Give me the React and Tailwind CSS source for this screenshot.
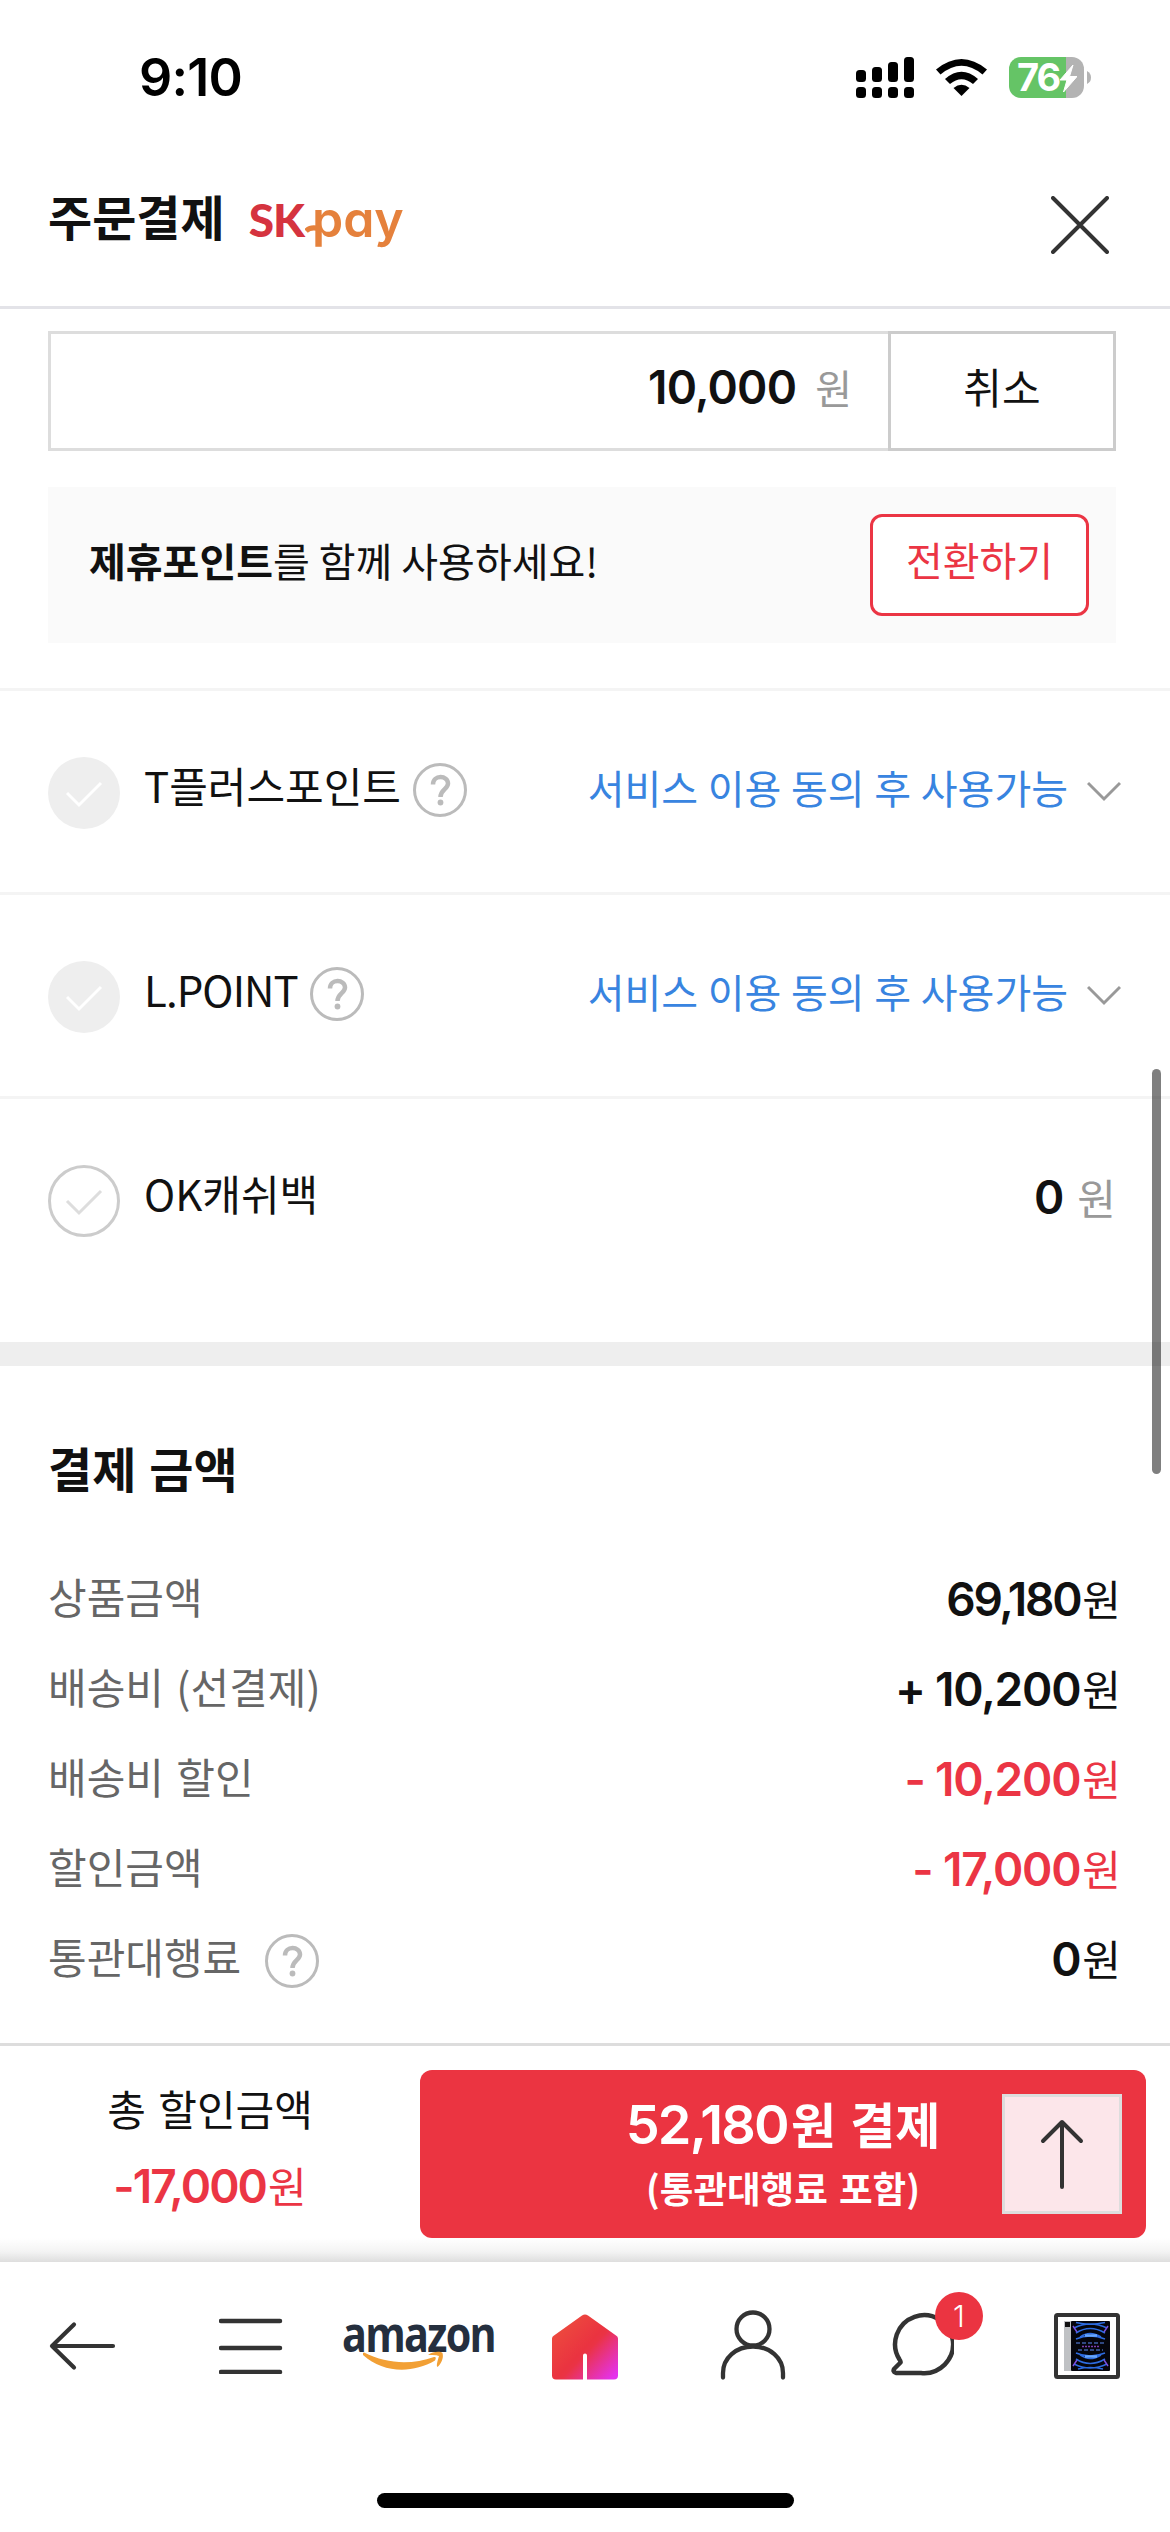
const KR = "font-['Noto_Sans_CJK_KR',sans-serif]";
const NUM = "font-['Inter','Noto_Sans_CJK_KR',sans-serif]";

function StatusBar() {
  const tops = [70, 67, 62, 57];
  return (
    <div className="flex h-[150px] shrink-0 items-start justify-between pl-[139px] pr-[79px]">
      <div className="mt-[47px] font-['Inter',sans-serif] text-[52px] font-semibold leading-[62px] tracking-[-0.800px] text-black">9:10</div>
      <div className="mt-[57px] flex h-[41px] items-start">
        <svg width="58" height="41" viewBox="856 57 58 41">
          {tops.map((t, i) => (
            <g key={t}>
              <rect x={856 + i * 16} y={t} width="10" height={82 - t} rx="3.5" />
              <rect x={856 + i * 16} y="87" width="10" height="11" rx="3.5" />
            </g>
          ))}
        </svg>
        <svg className="ml-[22px]" width="51" height="41" viewBox="936 57 51 41">
          <path d="M936 69.500Q961.500 48.500 987 69.500L982.500 74.500Q961.500 57 940.500 74.500Z" />
          <path d="M945 79Q961.500 64.500 978 79L973 84Q961.500 74.500 950 84Z" />
          <path d="M953.500 88Q961.500 81.500 969.500 88L961.500 96Z" />
        </svg>
        <div className="ml-[22px] flex h-[41px] w-[75px] items-center justify-center rounded-[12px] bg-[linear-gradient(90deg,#65c466_57px,#b3b3b3_57px)] pl-[1px]">
          <span className="font-['Inter',sans-serif] text-[38px] font-bold leading-[41px] tracking-[-2px] text-white">76</span>
          <svg width="18" height="28" viewBox="1059 64 18 28" className="shrink-0">
            <path d="M1073 65L1060 80H1067L1063.500 92L1077 76.500H1069.500Z" fill="#fff" stroke="#fff" />
          </svg>
        </div>
        <svg className="ml-[3px] mt-[14px]" width="4" height="13" viewBox="0 0 4 13"><path d="M0 0Q4 2 4 6.500T0 13Z" fill="#b3b3b3" /></svg>
      </div>
    </div>
  );
}

function SkPay() {
  return (
    <div className="relative ml-[24px] mt-[38px] flex h-[62px] items-baseline whitespace-nowrap leading-[62px]">
      <span className="font-['Lato',sans-serif] text-[46px] font-black tracking-[-1px] text-[#d5333f]">SK</span>
      <span className="ml-[8px] font-['Inter',sans-serif] text-[50px] font-semibold text-[#e5813c] [font-feature-settings:'cv11']">pay</span>
      <svg className="absolute left-[56px] top-[36px]" width="16" height="10" viewBox="0 0 16 10" fill="none"><path d="M1 7C5 3 9 3 15 5" stroke="#e5813c" strokeWidth="5" /></svg>
    </div>
  );
}

function Header() {
  return (
    <header className="flex h-[159px] shrink-0 items-start border-b-[3px] border-[#e3e3e8] pl-[48px]">
      <h1 className={`${KR} mt-[30px] text-[48px] font-bold leading-[71px] text-[#111]`}>주문결제</h1>
      <SkPay />
      <svg className="ml-auto mr-[61px] mt-[46px]" width="58" height="58" viewBox="0 0 58 58" stroke="#333" strokeWidth="4" strokeLinecap="round"><path d="M2 2L56 56M56 2L2 56" /></svg>
    </header>
  );
}

function Help({ className }) {
  return (
    <svg className={className} width="54" height="54" viewBox="0 0 54 54" fill="none" stroke="#bbb" strokeWidth="3">
      <circle cx="27" cy="27" r="25.500" />
      <path d="M20 21.500C20 11.500 35 12 35 20.500C35 26 27.500 26.500 27.500 34" strokeWidth="4.500" />
      <circle cx="27.500" cy="39.500" r="2.900" fill="#bbb" stroke="none" />
    </svg>
  );
}

function Check({ disabled }) {
  return (
    <svg className="mt-[66px] shrink-0" width="72" height="72" viewBox="0 0 72 72" fill="none">
      <circle cx="36" cy="36" r={disabled ? 36 : 34.500} fill={disabled ? "#eee" : "#fff"} stroke={disabled ? "none" : "#ccc"} strokeWidth="3" />
      <path d="M19 36L31 48L53 26" stroke={disabled ? "#fff" : "#ddd"} strokeWidth="3" />
    </svg>
  );
}

function PointRow({ label, children, help, disabled, last, tight }) {
  return (
    <div className={`flex shrink-0 items-start pl-[48px] ${last ? "h-[243px]" : "h-[204px] border-b-[3px] border-[#f4f4f4]"}`}>
      <Check disabled={disabled} />
      <span className={`${KR} ml-[24px] mt-[63px] text-[42px] leading-[62px] text-[#111] ${tight ? "tracking-[-0.900px]" : ""}`}>{label}</span>
      {help && <Help className="ml-[12px] mt-[72px]" />}
      {children}
    </div>
  );
}

function Consent() {
  return (
    <>
      <span className={`${KR} ml-auto mt-[66px] text-[40px] leading-[60px] text-[#3884e0] [word-spacing:0.700px]`}>서비스 이용 동의 후 사용가능</span>
      <svg className="ml-[19px] mr-[49px] mt-[90px]" width="34" height="21" viewBox="0 0 34 21" fill="none" stroke="#999" strokeWidth="3"><path d="M1 2L17 18L33 2" /></svg>
    </>
  );
}

function Amount({ label, value, red, help, tight }) {
  return (
    <div className="flex h-[90px] items-center">
      <span className={`${KR} -mt-[5px] text-[42px] leading-[62px] text-[#666] [word-spacing:3px]`}>{label}</span>
      {help && <Help className="ml-[24px] mt-[5px]" />}
      <span className={`ml-auto flex items-baseline leading-[62px] ${red ? "text-[#eb3544]" : "text-[#111]"}`}>
        <span className={`${NUM} text-[46px] font-semibold ${tight ? "tracking-[-2.200px]" : "tracking-[-1.200px]"}`}>{value}</span>
        <span className={`${KR} ml-[2px] text-[42px]`}>원</span>
      </span>
    </div>
  );
}

function PayBar() {
  return (
    <div className="flex h-[219px] shrink-0 items-start border-t-[3px] border-[#ddd] bg-[linear-gradient(0deg,#dedede_0px,#f3f3f3_10px,#fff_24px)]">
      <div className="flex w-[420px] flex-col items-center">
        <span className={`${KR} mt-[31px] text-[42px] leading-[62px] text-[#111] [word-spacing:3px]`}>총 할인금액</span>
        <span className="mt-[15px] flex items-baseline leading-[62px] text-[#eb3544]">
          <span className={`${NUM} text-[46px] font-semibold tracking-[-1.900px]`}>-17,000</span>
          <span className={`${KR} ml-[2px] text-[42px]`}>원</span>
        </span>
      </div>
      <button className="relative mt-[24px] flex h-[168px] w-[726px] flex-col items-center rounded-[12px] bg-[#eb3441] text-white">
        <span className="mt-[17px] flex items-baseline whitespace-nowrap leading-[71px]">
          <span className={`${NUM} text-[54px] font-semibold tracking-[-1.800px]`}>52,180</span>
          <span className={`${KR} ml-[3px] text-[49px] font-bold [word-spacing:3px]`}>원 결제</span>
        </span>
        <span className={`${KR} mt-[1px] text-[36.500px] font-bold leading-[54px] [word-spacing:3px]`}>(통관대행료 포함)</span>
        <span className="absolute right-[24px] top-[24px] flex h-[120px] w-[120px] items-center justify-center border-[3px] border-[#ddd] bg-[#fce6ea]">
          <svg width="44" height="70" viewBox="0 0 44 70" fill="none" stroke="#333" strokeWidth="4" strokeLinecap="round" strokeLinejoin="round"><path d="M22 68V3M3 22L22 3L41 22" /></svg>
        </span>
      </button>
    </div>
  );
}

function Nav() {
  return (
    <nav className="flex h-[270px] shrink-0 flex-col justify-between bg-white">
      <div className="flex h-[165px] items-start">
        <svg className="ml-[48px] mt-[59px]" width="70" height="50" viewBox="48 2315 70 50" fill="none" stroke="#333" strokeWidth="4.200" strokeLinecap="round" strokeLinejoin="round"><path d="M113 2340H52M74 2318.500L52 2340L74 2361.500" /></svg>
        <svg className="ml-[101px] mt-[56px]" width="64" height="56" viewBox="219 2313 64 56" stroke="#333" strokeWidth="4.500" strokeLinecap="round"><path d="M221 2316H280M221 2343H280M221 2367H280" /></svg>
        <div className="relative ml-[59px] mt-[48px] h-[62px] w-[152px]">
          <span className="block origin-left scale-x-[0.86] whitespace-nowrap font-['Open_Sans',sans-serif] text-[48px] font-bold leading-[48px] tracking-[-2px] text-[#252f3e]">amazon</span>
          <svg className="absolute left-[21px] top-[40px]" width="82" height="21" viewBox="364 2349 82 21" fill="#f2a035">
            <path d="M365 2351.500C388 2363 412 2364 435 2356Q438 2355.500 436 2359.500C413 2373 384 2372 364 2354Q363.500 2351.500 365 2351.500Z" />
            <path d="M429 2354C434 2350 442 2350 443.500 2352C445 2357 442 2363 438.500 2366Q436.500 2366 440 2355Q438 2353.500 429 2354Z" />
          </svg>
        </div>
        <svg className="ml-[58px] mt-[52px]" width="66" height="66" viewBox="552 2314 66 65">
          <defs><linearGradient id="home" x1="0.1" y1="0.15" x2="0.95" y2="0.95"><stop offset="0" stopColor="#ed4b3e" /><stop offset=".46" stopColor="#ea3340" /><stop offset=".52" stopColor="#ea3345" /><stop offset="1" stopColor="#e432ee" /></linearGradient></defs>
          <path d="M552 2338Q552 2336 554 2335L582 2315Q585 2313 588 2315L616 2335Q618 2336 618 2338V2375Q618 2379 614 2379H587V2355Q587 2353 585 2353T583 2355V2379H556Q552 2379 552 2375Z" fill="url(#home)" />
        </svg>
        <svg className="ml-[101px] mt-[47px]" width="68" height="73" viewBox="718 2309 68 73" fill="none" stroke="#333" strokeWidth="4.300" strokeLinecap="round"><circle cx="752" cy="2329" r="16.500" /><path d="M722 2377.500V2373C722 2358 735 2346.500 752 2346.500S782 2358 782 2373V2377.500" /></svg>
        <div className="relative ml-[103px] mt-[29px] h-[90px] w-[94px]">
          <svg className="mt-[20px]" width="64" height="66" viewBox="890 2311 64 66" fill="none" stroke="#333" strokeWidth="4.500" strokeLinejoin="round"><path d="M921 2373H896Q892 2371.500 894.500 2368.500L900.500 2362.500Q901 2361.500 899.500 2359.500A29 29 0 1 1 921 2373Z" /></svg>
          <span className="absolute left-[45px] top-[1px] flex h-[48px] w-[48px] items-center justify-center rounded-full bg-[#eb3441] font-['Inter',sans-serif] text-[30px] font-light leading-[48px] text-white">1</span>
        </div>
        <svg className="ml-[70px] mt-[51px]" width="66" height="66" viewBox="0 0 66 66">
          <rect x="2" y="2" width="62" height="62" rx="1.500" fill="#fff" stroke="#333" strokeWidth="4" />
          <rect x="10" y="8" width="9" height="50" fill="#bfc1c4" />
          <rect x="11" y="9" width="5" height="5" fill="#111" />
          <rect x="17" y="8" width="39" height="50" rx="1" fill="#05050c" />
          <g fill="none" stroke="#2d6be0" strokeWidth="1.500">
            <path d="M22 9.500Q36 13 51 9.500M20 15Q36 7 53 15M22 20Q36 11 51 20M26 24Q36 17 47 24M22 26Q36 20 51 26M22 40Q36 46 51 40M26 42Q36 49 47 42M22 46Q36 55 51 46M20 51Q36 59 53 51M24 56Q36 53 49 56" />
            <path d="M31 22.500H43M31 43.500H43" stroke="#67a7ff" strokeWidth="2.500" />
            <path d="M19 13L23 19M54 13L50 19M19 53L23 47M54 53L50 47" stroke="#7b4fe0" />
            <path d="M22 30H51M24 37H49" stroke="#3f5fa8" strokeDasharray="4 2" />
            <path d="M28 33.500H46" stroke="#7c3fae" strokeDasharray="2 1" />
          </g>
        </svg>
      </div>
      <div className="mb-[24px] ml-[377px] h-[15px] w-[417px] rounded-full bg-black" />
    </nav>
  );
}

export default function App() {
  return (
    <div className="relative flex h-[2532px] w-[1170px] flex-col overflow-hidden bg-white">
      <StatusBar />
      <Header />
      <main className="flex h-[1734px] shrink-0 flex-col overflow-hidden">
        <div className="ml-[48px] mt-[22px] flex h-[120px] w-[1068px] shrink-0">
          <div className="flex w-[840px] items-baseline justify-end border-[3px] border-r-0 border-[#ddd] pr-[36px] pt-[22px] leading-[62px]">
            <span className={`${NUM} text-[46px] font-semibold tracking-[-0.800px] text-[#111]`}>10,000</span>
            <span className={`${KR} ml-[19px] text-[40px] text-[#999]`}>원</span>
          </div>
          <button className={`${KR} w-[228px] border-[3px] border-[#ccc] pb-[12px] text-[42px] text-[#111]`}>취소</button>
        </div>
        <div className="ml-[48px] mt-[36px] flex h-[156px] w-[1068px] shrink-0 items-center bg-[#fafafa] pl-[41px] pr-[27px]">
          <span className={`${KR} pb-[11px] text-[40px] leading-[60px] text-[#111]`}><b className="font-bold">제휴포인트</b>를 함께 사용하세요!</span>
          <button className={`${KR} ml-auto h-[102px] w-[219px] rounded-[12px] border-[3px] border-[#eb3544] bg-white pb-[12px] text-[40px] text-[#eb3544]`}>전환하기</button>
        </div>
        <div className="mt-[45px] h-[3px] shrink-0 bg-[#f4f4f4]" />
        <PointRow label="T플러스포인트" help disabled><Consent /></PointRow>
        <PointRow label="L.POINT" help disabled tight><Consent /></PointRow>
        <PointRow label="OK캐쉬백" last>
          <span className={`${NUM} ml-auto mt-[66px] text-[46px] font-semibold leading-[64px] text-[#111]`}>0</span>
          <span className={`${KR} ml-[13px] mr-[54px] mt-[67px] text-[42px] leading-[62px] text-[#999]`}>원</span>
        </PointRow>
        <div className="h-[24px] shrink-0 bg-[#eee]" />
        <h2 className={`${KR} ml-[48px] mt-[66px] shrink-0 text-[48px] font-bold leading-[71px] text-[#111] [word-spacing:2px]`}>결제 금액</h2>
        <section className="ml-[48px] mr-[49px] mt-[50px] shrink-0">
          <Amount label="상품금액" value="69,180" tight />
          <Amount label="배송비 (선결제)" value="+ 10,200" />
          <Amount label="배송비 할인" value="- 10,200" red />
          <Amount label="할인금액" value="- 17,000" red />
          <Amount label="통관대행료" value="0" help />
        </section>
      </main>
      <PayBar />
      <Nav />
      <div className="absolute left-[1152px] top-[1069px] h-[405px] w-[9px] rounded-full bg-black/50" />
    </div>
  );
}
